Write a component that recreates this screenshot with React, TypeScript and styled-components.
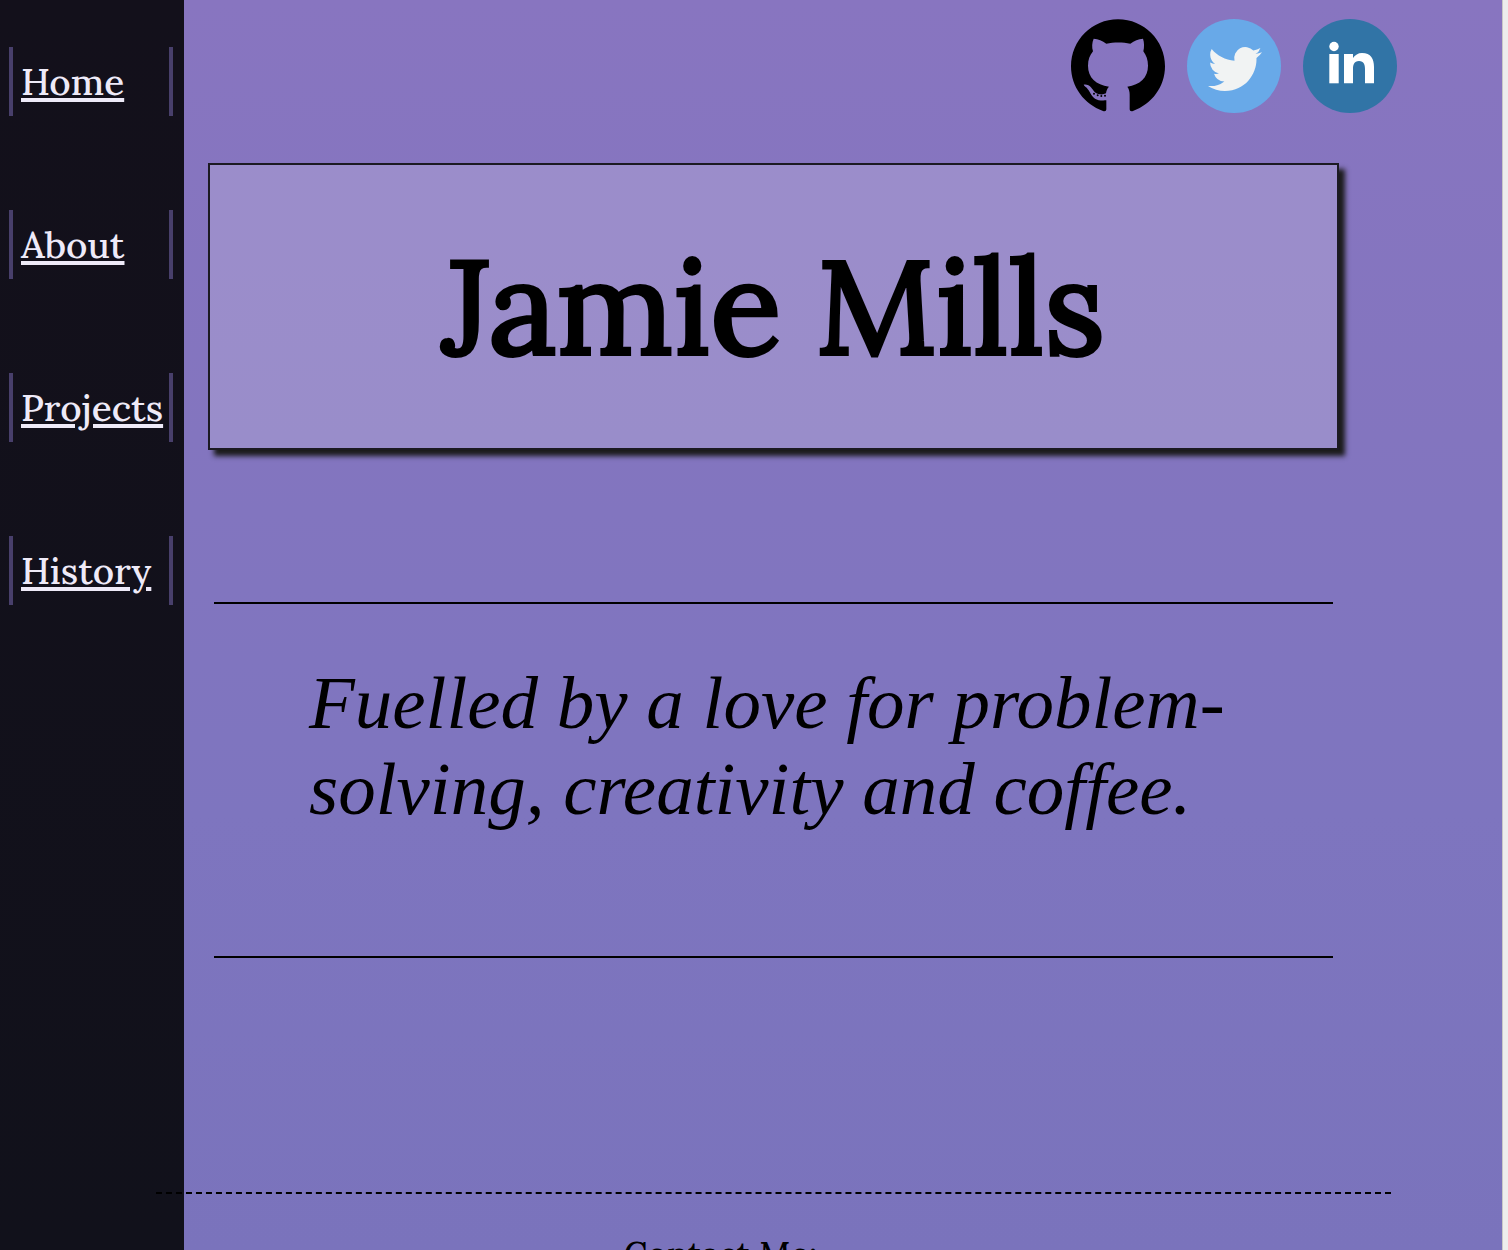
import React from "react";
import styled, { createGlobalStyle } from "styled-components";

const GlobalStyle = createGlobalStyle`
  * { box-sizing: border-box; }
  body { margin: 0; font-family: Lora, "Liberation Serif", serif; color: #000; }
`;

const Shell = styled.div`
  display: flex;
  height: 100vh;
  overflow: hidden;
  background: linear-gradient(#8875c0, #8375bf 35%, #7e75bf 65%, #7a73bc);
`;

const Sidebar = styled.nav`
  flex: none;
  width: 184px;
  padding: 47px 11px 0 9px;
  background: linear-gradient(#13101b, #11111b);
`;

const NavList = styled.ul`
  display: flex;
  flex-direction: column;
  gap: 94px;
  margin: 0;
  padding: 0;
  list-style: none;
`;

const NavItem = styled.li`
  padding: 8px;
  border: solid #483f6b;
  border-width: 0 4px;
`;

const NavLink = styled.a`
  display: block;
  font-size: 37px;
  line-height: 53px;
  font-weight: 500;
  color: #eeeaf8;
  text-decoration: underline;
  text-decoration-thickness: 4px;
  text-underline-offset: 3px;
`;

const Main = styled.main`
  flex: 1;
  min-width: 0;
`;

const SocialBar = styled.header`
  display: flex;
  justify-content: flex-end;
  gap: 22px;
  padding: 19px 105px 50px 0;
`;

const SocialLink = styled.a`
  display: block;
  width: 94px;
  height: 94px;

  svg { display: block; width: 100%; height: 100%; }
`;

const Banner = styled.section`
  margin: 0 163px 0 24px;
  padding: 61px 20px;
  border: 2px solid #1c1a22;
  background: rgba(255, 255, 255, 0.18);
  box-shadow: 6px 6px 5px #1b1b1b;
  text-align: center;
`;

const Name = styled.h1`
  margin: 0;
  font-size: 131px;
  line-height: 161px;
  font-weight: 400;
  -webkit-text-stroke: 4px #000;
`;

const Intro = styled.section`
  margin: 152px 169px 0 30px;
  padding: 56px 95px 124px;
  border: solid #000;
  border-width: 2px 0;
`;

const Tagline = styled.p`
  margin: 0;
  font-family: "Liberation Serif", serif;
  font-size: 75px;
  line-height: 86px;
  font-style: italic;
`;

const Footer = styled.footer`
  margin: 234px 111px 0 -28px;
  padding-top: 38px;
  border-top: 2px dashed #000;
  text-align: center;
`;

const ContactHeading = styled.h2`
  margin: 0;
  padding-right: 106px;
  font-size: 34px;
  line-height: 44px;
  font-weight: 500;
`;

const ScrollTrack = styled.div`
  flex: none;
  width: 6px;
  border-left: 1px solid #c8c8c8;
  background: #ededed;
`;

const pages = ["Home", "About", "Projects", "History"];

const GitHubIcon = () => (
  <svg viewBox="0 0 282 282" aria-hidden="true">
    <path d="M141 1C63 1 0 64 0 142c0 62 40 114 96 134 6 2 10 0 10-6V244C92 245 80 244 72 239 60 230 57 217 47 206 43 202 39 201 38 197 46 195 55 199 61 206 67 213 71 222 82 225 90 227 98 227 105 223 106 215 109 208 114 203 75 197 51 176 51 140 51 123 56 109 66 97 62 84 63 71 68 59 82 59 94 66 106 74 128 69 156 69 178 74 190 66 202 59 216 59 220 71 220 84 217 97 226 109 231 123 231 140 231 176 207 197 169 203 174 210 176 218 176 227V270C176 276 180 278 186 276 242 256 282 204 282 142 282 64 219 1 141 1Z" />
    <circle cx="69" cy="224" r="3" />
    <circle cx="80" cy="229" r="3" />
    <circle cx="91" cy="231" r="3" />
    <circle cx="102" cy="230" r="3" />
  </svg>
);

const TwitterIcon = () => (
  <svg viewBox="0 0 94 94" aria-hidden="true">
    <circle cx="47" cy="47" r="47" fill="#68a9e8" />
    <g transform="translate(21 23) scale(2.25)">
      <path
        fill="#f1f3f3"
        d="M23.953 4.57a10 10 0 01-2.825.775 4.958 4.958 0 002.163-2.723c-.951.555-2.005.959-3.127 1.184a4.92 4.92 0 00-8.384 4.482C7.69 8.095 4.067 6.13 1.64 3.162a4.822 4.822 0 00-.666 2.475c0 1.71.87 3.213 2.188 4.096a4.904 4.904 0 01-2.228-.616v.06a4.923 4.923 0 003.946 4.827 4.996 4.996 0 01-2.212.085 4.936 4.936 0 004.604 3.417 9.867 9.867 0 01-6.102 2.105c-.39 0-.779-.023-1.17-.067a13.995 13.995 0 007.557 2.209c9.053 0 13.998-7.496 13.998-13.985 0-.21 0-.42-.015-.63A9.935 9.935 0 0024 4.59z"
      />
    </g>
  </svg>
);

const LinkedInIcon = () => (
  <svg viewBox="0 0 94 94" aria-hidden="true">
    <circle cx="47" cy="47" r="47" fill="#3174a6" />
    <circle cx="31" cy="27.5" r="4.7" fill="#fff" />
    <rect x="26.3" y="35" width="9.4" height="29.3" fill="#fff" />
    <path
      fill="#fff"
      d="M41 35h9v4c2-3 5-5 9-5 9 0 12 6 12 14v16.3h-9V50c0-4-1-8-6-8s-6 4-6 8v14.3h-9z"
    />
  </svg>
);

const socials = [
  { name: "GitHub", href: "#github", Icon: GitHubIcon },
  { name: "Twitter", href: "#twitter", Icon: TwitterIcon },
  { name: "LinkedIn", href: "#linkedin", Icon: LinkedInIcon },
];

export default function App() {
  return (
    <>
      <GlobalStyle />
      <Shell>
        <Sidebar>
          <NavList>
            {pages.map((page) => (
              <NavItem key={page}>
                <NavLink href={`#${page.toLowerCase()}`}>{page}</NavLink>
              </NavItem>
            ))}
          </NavList>
        </Sidebar>
        <Main>
          <SocialBar>
            {socials.map(({ name, href, Icon }) => (
              <SocialLink key={name} href={href} aria-label={name}>
                <Icon />
              </SocialLink>
            ))}
          </SocialBar>
          <Banner>
            <Name>Jamie Mills</Name>
          </Banner>
          <Intro>
            <Tagline>Fuelled by a love for problem-solving, creativity and coffee.</Tagline>
          </Intro>
          <Footer>
            <ContactHeading>Contact Me:</ContactHeading>
          </Footer>
        </Main>
        <ScrollTrack />
      </Shell>
    </>
  );
}
